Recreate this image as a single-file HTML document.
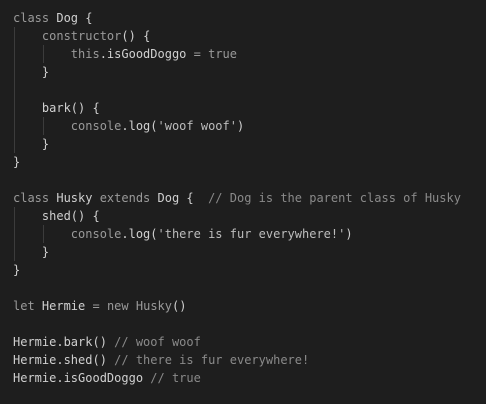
<!DOCTYPE html>
<html><head><style>
html,body{margin:0;padding:0;background:#1e1e1e;width:486px;height:404px;overflow:hidden}
pre{margin:0;position:absolute;left:13px;top:9px;font-family:"DejaVu Sans Mono","Liberation Mono",monospace;font-size:12px;line-height:18px;color:#d0d0d0}
.k{color:#9a9a9a}.c{color:#8a8a8a}.s{color:#bdbdbd}
.g{position:absolute;width:1px;background:#3c3c3c}
</style></head><body>
<div class="g" style="left:14px;top:27px;height:126px"></div>
<div class="g" style="left:43px;top:45px;height:18px"></div>
<div class="g" style="left:43px;top:117px;height:18px"></div>
<div class="g" style="left:14px;top:207px;height:54px"></div>
<div class="g" style="left:43px;top:225px;height:18px"></div>
<pre><span class="k">class</span> Dog {
    <span class="k">constructor</span>() {
        <span class="k">this</span>.isGoodDoggo <span class="k">=</span> <span class="k">true</span>
    }

    bark() {
        <span class="k">console</span>.log(<span class="s">'woof woof'</span>)
    }
}

<span class="k">class</span> Husky <span class="k">extends</span> Dog {  <span class="c">// Dog is the parent class of Husky</span>
    shed() {
        <span class="k">console</span>.log(<span class="s">'there is fur everywhere!'</span>)
    }
}

<span class="k">let</span> Hermie <span class="k">=</span> <span class="k">new</span> <span class="k">Husky</span>()

Hermie.bark() <span class="c">// woof woof</span>
Hermie.shed() <span class="c">// there is fur everywhere!</span>
Hermie.isGoodDoggo <span class="c">// true</span></pre>
</body></html>
